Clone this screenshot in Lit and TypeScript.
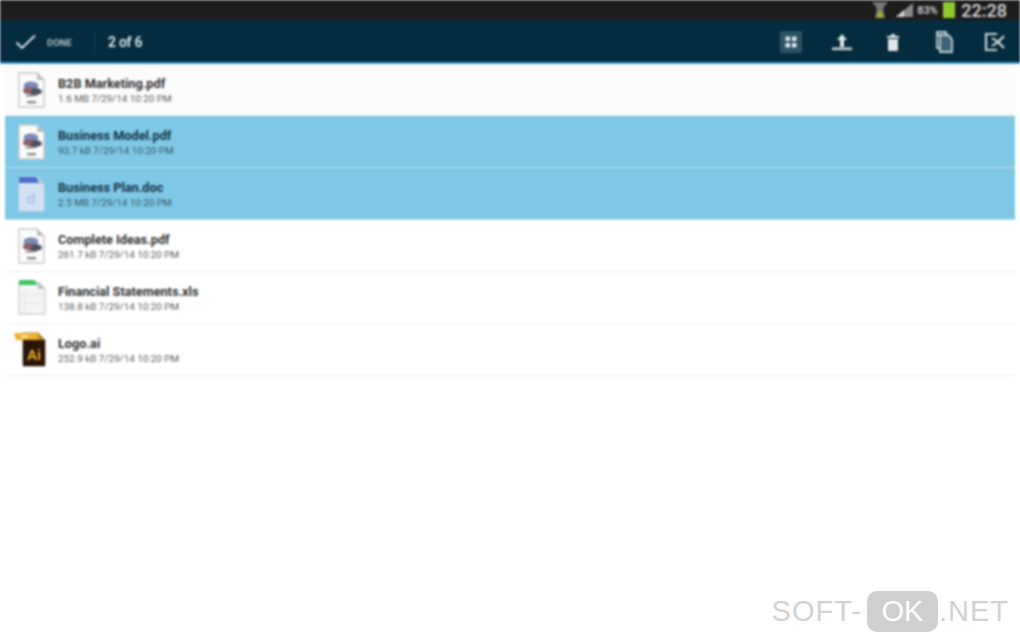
import { LitElement, html, css, svg } from "lit";
import { customElement } from "lit/decorators.js";

type Kind = "pdf" | "doc" | "xls" | "ai";
interface Row { name: string; meta: string; kind: Kind; selected?: boolean; }

const ROWS: Row[] = [
  { name: "B2B Marketing.pdf", meta: "1.6 MB 7/29/14 10:20 PM", kind: "pdf" },
  { name: "Business Model.pdf", meta: "93.7 kB 7/29/14 10:20 PM", kind: "pdf", selected: true },
  { name: "Business Plan.doc", meta: "2.5 MB 7/29/14 10:20 PM", kind: "doc", selected: true },
  { name: "Complete Ideas.pdf", meta: "261.7 kB 7/29/14 10:20 PM", kind: "pdf" },
  { name: "Financial Statements.xls", meta: "138.8 kB 7/29/14 10:20 PM", kind: "xls" },
  { name: "Logo.ai", meta: "252.9 kB 7/29/14 10:20 PM", kind: "ai" },
];

function fileIcon(kind: Kind) {
  if (kind === "pdf") {
    return svg`<svg class="ficon" viewBox="0 0 34 38" width="34" height="38">
      <path d="M5 2h18l7 7v27H5z" fill="#fbfbfb" stroke="#c8c8c8" stroke-width="1.4"/>
      <path d="M23 2l7 7h-7z" fill="#bdbdbd"/>
      <ellipse cx="17" cy="14.5" rx="7.5" ry="4" fill="#7b88b8"/>
      <ellipse cx="20.5" cy="20.5" rx="7.5" ry="3.6" fill="#4c4f60"/>
      <ellipse cx="13.5" cy="19.5" rx="4.6" ry="3.6" fill="#8e6068"/>
      <path d="M12 25l11-1" stroke="#777" stroke-width="1.5"/>
      <rect x="13" y="30" width="9" height="2.4" fill="#8c8c8c"/>
    </svg>`;
  }
  if (kind === "doc") {
    return svg`<svg class="ficon" viewBox="0 0 34 38" width="34" height="38">
      <path d="M5 2h19l6 7v27H5z" fill="#d3e2f1" stroke="#c4d6ea" stroke-width="1"/>
      <path d="M5 2h17l4 6H5z" fill="#4d6fc9"/>
      <path d="M24 2l6 7h-6z" fill="#b9c4d2"/>
      <text x="17" y="29" class="doc-d">d</text>
    </svg>`;
  }
  if (kind === "xls") {
    return svg`<svg class="ficon" viewBox="0 0 34 38" width="34" height="38">
      <path d="M5 3h19l7 7v25H5z" fill="#f4f5f3" stroke="#cfcfcf" stroke-width="1.4"/>
      <path d="M5 1h15l4 5H5z" fill="#3fc25c"/>
      <path d="M24 3l7 7h-7z" fill="#bdbdbd"/>
      <path d="M11 10v24M5 16h26M5 24h26" stroke="#e2e2e2" stroke-width="1" fill="none"/>
    </svg>`;
  }
  return svg`<svg class="ficon" viewBox="0 0 34 38" width="34" height="38">
    <path d="M9 2h15l7 7v26H9z" fill="#2b1508" stroke="#3d2410" stroke-width="0.6"/>
    <path d="M0 2h24v7H2z" fill="#eeb02e"/>
    <rect x="7" y="4" width="7" height="3" fill="#f8dc94"/>
    <path d="M24 1l7 8h-7z" fill="#c08c2a"/>
    <text x="20" y="29" class="ai-t">Ai</text>
  </svg>`;
}

@customElement("app-root")
export class AppRoot extends LitElement {
  static styles = css`
    :host { display: block; width: 1020px; height: 637px; background: #fff; position: relative; overflow: hidden;
      font-family: "Roboto", "Liberation Sans", sans-serif; }
    .soft { filter: blur(0.8px); }
    .status { height: 20px; background: #1d1d1d; display: flex; align-items: center; justify-content: flex-end;
      padding-right: 13px; color: #d4d4d4; }
    .status svg { display: block; }
    .wifi { margin-right: 6px; }
    .signal { margin-right: 2px; }
    .pct { font-size: 11px; font-weight: 700; color: #c4c4c4; letter-spacing: -0.2px; width: 26px; }
    .batt { width: 12px; height: 16px; background: #8fcb2e; margin-right: 6px; }
    .clock { font-size: 18px; font-weight: 500; color: #d8d8d8; }
    .bar { height: 40px; padding-top: 2px; background: #042c3e; border-bottom: 2px solid #3aa0cc; display: flex;
      align-items: center; color: #dfe7ea; }
    .check { margin-left: 15px; flex: none; }
    .done { font-size: 9.5px; font-weight: 700; color: #aebdc4; margin-left: 11px; width: 26px; }
    .div { width: 1px; height: 24px; background: #1b4253; margin-left: 21px; }
    .count { font-size: 14px; font-weight: 700; color: #d5dfe3; margin-left: 13px; letter-spacing: -0.3px; }
    .actions { margin-left: auto; display: flex; align-items: center; }
    .act { width: 51px; display: flex; justify-content: center; }
    .act svg { display: block; }
    .list { padding: 0 5px; }
    .row { height: 51px; border-bottom: 1px solid #eeeeee; display: flex; align-items: center; background: #fff; }
    .row.first { background: #fbfbfb; }
    .row.sel { background: #7ec8e5; border-bottom-color: #b5e0f0; }
    .ficon { display: block; margin-left: 9px; flex: none; }
    .doc-d { font: 700 15px "Liberation Sans", sans-serif; fill: #a9c3e4; text-anchor: middle; }
    .ai-t { font: 700 14px "Liberation Sans", sans-serif; fill: #eeb02e; text-anchor: middle; }
    .txt { margin-left: 10px; padding-top: 1px; display: flex; flex-direction: column; gap: 2px; }
    .name { font-size: 12.7px; line-height: 15px; font-weight: 700; color: #333333; }
    .sel .name { color: #173546; }
    .meta { font-size: 9.9px; line-height: 11px; color: #626262; }
    .sel .meta { color: #365868; }
    .mark { position: absolute; right: 11px; bottom: 5px; display: flex; align-items: center;
      font-family: "Liberation Sans", sans-serif; font-size: 29px; color: #d2d2d2; letter-spacing: 1px; }
    .ok { background: #cfcfcf; color: #fff; border-radius: 10px; height: 41px; width: 71px; display: flex;
      align-items: center; justify-content: center; margin: 0 1px 0 5px; letter-spacing: 0; }
  `;

  render() {
    return html`
      <div class="soft">
        <div class="status">
          <svg class="wifi" width="18" height="18" viewBox="0 0 18 18">
            <path d="M1 1h16l-5 6 1 3H5l1-3z" fill="#777"/>
            <path d="M6 10h6l2 7H4z" fill="#8a8a5a"/>
            <circle cx="9" cy="14" r="2.6" fill="#8fc23a"/>
          </svg>
          <svg class="signal" width="20" height="16" viewBox="0 0 20 16">
            <path d="M1 15L18 1v14z" fill="#8a8a8a"/><path d="M1 15l8-7v7z" fill="#d5d5d5"/>
          </svg>
          <span class="pct">83%</span>
          <div class="batt"></div>
          <span class="clock">22:28</span>
        </div>
        <div class="bar">
          <svg class="check" width="21" height="16" viewBox="0 0 21 16">
            <path d="M1.5 8.5l5.5 5.5L20 1.5" fill="none" stroke="#dfe7ea" stroke-width="1.8"/>
          </svg>
          <span class="done">DONE</span>
          <div class="div"></div>
          <span class="count">2 of 6</span>
          <div class="actions">
            <div class="act"><svg width="22" height="22" viewBox="0 0 22 22">
              <rect width="22" height="22" rx="2" fill="#2c5263"/>
              <g fill="#e4ecef"><rect x="5.5" y="5.5" width="4.6" height="4.6" rx="1"/><rect x="11.9" y="5.5" width="4.6" height="4.6" rx="1"/><rect x="5.5" y="11.9" width="4.6" height="4.6" rx="1"/><rect x="11.9" y="11.9" width="4.6" height="4.6" rx="1"/></g>
            </svg></div>
            <div class="act"><svg width="20" height="20" viewBox="0 0 20 20">
              <path d="M10 2l5 6h-3v7H8V8H5z" fill="#e0e7ea"/><rect x="0" y="15.5" width="20" height="2.6" fill="#c6d2d7"/>
            </svg></div>
            <div class="act"><svg width="14" height="20" viewBox="0 0 14 20">
              <path d="M1 4h12v2H1zM5 2h4v2H5zM2 7h10v11a1 1 0 0 1-1 1H3a1 1 0 0 1-1-1z" fill="#e0e7ea"/>
            </svg></div>
            <div class="act"><svg width="18" height="22" viewBox="0 0 18 22">
              <path d="M2 1h9v3H2zM2 1v16h3" fill="none" stroke="#c3d0d6" stroke-width="1.8"/>
              <path d="M5 4h8l4 4v13H5z" fill="#3d6474" stroke="#c3d0d6" stroke-width="1.8"/>
            </svg></div>
            <div class="act"><svg width="22" height="20" viewBox="0 0 22 20">
              <path d="M13 2H2v16h11" fill="none" stroke="#c3d0d6" stroke-width="2.2"/>
              <path d="M8 6l6 4-6 4M20 4l-6 6 6 6" fill="none" stroke="#dbe3e6" stroke-width="2"/>
            </svg></div>
          </div>
        </div>
        <div class="list">
          ${ROWS.map(
            (r, i) => html`
              <div class="row ${r.selected ? "sel" : ""} ${i === 0 ? "first" : ""}">
                ${fileIcon(r.kind)}
                <div class="txt">
                  <span class="name">${r.name}</span>
                  <span class="meta">${r.meta}</span>
                </div>
              </div>
            `
          )}
        </div>
      </div>
      <div class="mark">SOFT-<span class="ok">OK</span>.NET</div>
    `;
  }
}
